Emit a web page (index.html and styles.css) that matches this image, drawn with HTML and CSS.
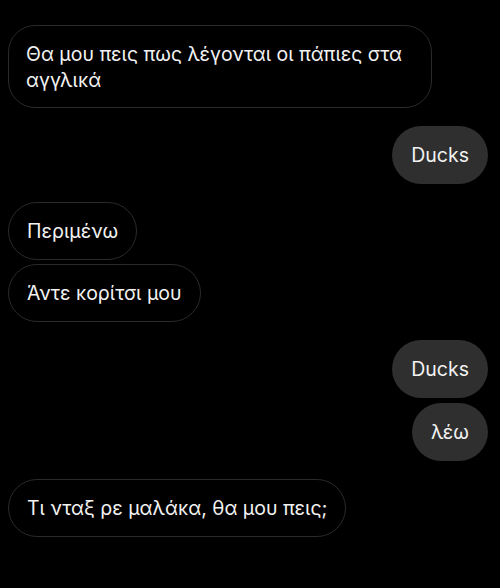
FILE: index.html
```html
<!DOCTYPE html>
<html lang="el">
<head>
<meta charset="utf-8">
<link rel="stylesheet" href="styles.css">
</head>
<body>
<div class="chat">
  <div class="group in">
    <div class="bubble multi">Θα μου πεις πως λέγονται οι πάπιες στα αγγλικά</div>
  </div>
  <div class="group out">
    <div class="bubble">Ducks</div>
  </div>
  <div class="group in">
    <div class="bubble">Περιμένω</div>
    <div class="bubble">Άντε κορίτσι μου</div>
  </div>
  <div class="group out">
    <div class="bubble">Ducks</div>
    <div class="bubble">λέω</div>
  </div>
  <div class="group in">
    <div class="bubble">Τι νταξ ρε μαλάκα, θα μου πεις;</div>
  </div>
</div>
</body>
</html>
```
FILE: styles.css
```css
html, body {
  margin: 0;
  padding: 0;
  background: #000;
}
body {
  width: 500px;
  height: 588px;
  overflow: hidden;
  font-family: Inter, "Noto Sans", sans-serif;
  color: #f2f2f2;
}
.chat {
  display: flex;
  flex-direction: column;
  gap: 18px;
  padding: 25px 12px 0 8px;
}
.group {
  display: flex;
  flex-direction: column;
  gap: 5px;
}
.group.in { align-items: flex-start; gap: 4px; }
.group.out { align-items: flex-end; }
.bubble {
  box-sizing: border-box;
  font-size: 19.5px;
  line-height: 26px;
  padding: 16px 19px;
  border-radius: 29px;
  max-width: 424px;
}
.in .bubble {
  border: 1px solid #2a2a2a;
  background: #000;
  padding: 15px 18px;
}
.out .bubble {
  background: #2f2f2f;
}
.in .bubble.multi {
  padding: 15px 18px 14px 17px;
  border-radius: 27px;
}
```
